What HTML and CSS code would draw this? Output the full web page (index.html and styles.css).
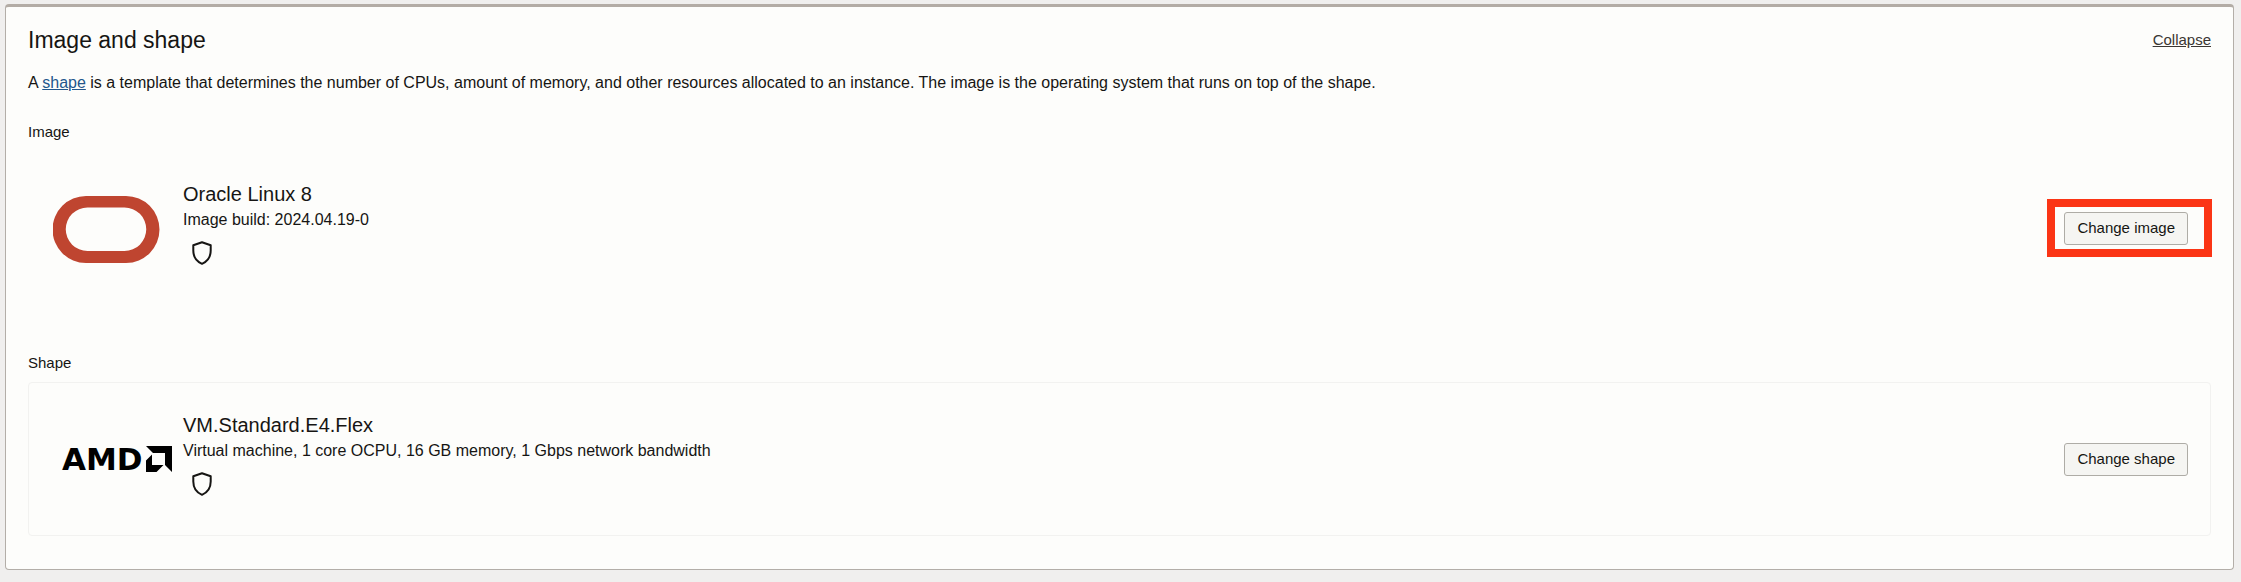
FILE: index.html
```html
<!DOCTYPE html>
<html lang="en">
<head>
<meta charset="utf-8">
<title>Image and shape</title>
<link rel="stylesheet" href="styles.css">
</head>
<body>
<main class="panel">
  <header class="panel-header">
    <h2 class="panel-title">Image and shape</h2>
    <a class="collapse" href="#">Collapse</a>
  </header>
  <p class="intro">A <a class="link" href="#">shape</a> is a template that determines the number of CPUs, amount of memory, and other resources allocated to an instance. The image is the operating system that runs on top of the shape.</p>

  <section class="group">
    <h3 class="label">Image</h3>
    <div class="card card-plain">
      <div class="logo">
        <svg width="108" height="72" viewBox="0 0 108 72" role="img" aria-label="Oracle">
          <path fill="#bf4530" fill-rule="evenodd" d="M33 4H73A33.500 33.500 0 0 1 73 71H33A33.500 33.500 0 0 1 33 4ZM34.500 15.500A21.700 21.700 0 0 0 34.500 59H71.500A21.700 21.700 0 0 0 71.500 15.500Z"/>
        </svg>
      </div>
      <div class="details">
        <div class="name">Oracle Linux 8</div>
        <div class="meta">Image build: 2024.04.19-0</div>
        <svg class="shield" width="20" height="24" viewBox="0 0 20 24" aria-hidden="true"><path d="M10 1.200L1.300 4.300V9.500C1.300 15.500 4.500 20.500 10 22.800C15.500 20.500 18.700 15.500 18.700 9.500V4.300Z"/></svg>
      </div>
      <div class="action highlighted"><button class="btn" type="button">Change image</button></div>
    </div>
  </section>

  <section class="group">
    <h3 class="label">Shape</h3>
    <div class="card">
      <div class="logo">
        <svg width="120" height="46" viewBox="0 0 120 46" role="img" aria-label="AMD">
          <text class="amd-word" x="9" y="34">AMD</text>
          <path d="M93 10H119V36L112 29V17H100ZM99 18.500V29H110.500L103.500 36H93V24.500Z"/>
        </svg>
      </div>
      <div class="details">
        <div class="name">VM.Standard.E4.Flex</div>
        <div class="meta">Virtual machine, 1 core OCPU, 16 GB memory, 1 Gbps network bandwidth</div>
        <svg class="shield" width="20" height="24" viewBox="0 0 20 24" aria-hidden="true"><path d="M10 1.200L1.300 4.300V9.500C1.300 15.500 4.500 20.500 10 22.800C15.500 20.500 18.700 15.500 18.700 9.500V4.300Z"/></svg>
      </div>
      <div class="action"><button class="btn" type="button">Change shape</button></div>
    </div>
  </section>
</main>
</body>
</html>
```
FILE: styles.css
```css
* { box-sizing: border-box; }
body {
  margin: 0;
  padding: 4px 7px 11px 5px;
  background: #f0efee;
  color: #161513;
  font: 15px/20px "Liberation Sans", Arial, sans-serif;
}
.panel {
  padding: 18px 22px 33px;
  background: #fdfdfb;
  border: 1px solid #b3aea8;
  border-top: 3px solid #b3aca5;
  border-radius: 4px;
}
.panel-header {
  display: flex;
  justify-content: space-between;
  align-items: center;
  margin-bottom: 18px;
}
.panel-title {
  margin: 0;
  font-size: 23px;
  line-height: 30px;
  font-weight: 400;
}
.collapse {
  color: #3a3632;
  text-underline-offset: 1px;
}
.link {
  color: #22568c;
  text-underline-offset: 1px;
}
.intro {
  margin: 0 0 29px;
  font-size: 16px;
}
.group + .group { margin-top: 48px; }
.label {
  margin: 0 0 9px;
  font-size: 15px;
  font-weight: 400;
}
.card {
  display: grid;
  grid-template-columns: 130px 1fr auto;
  min-height: 154px;
  padding: 30px 22px 30px 24px;
  border: 1px solid #f2f2f0;
  border-radius: 4px;
}
.card-plain { border-color: transparent; }
.logo {
  display: flex;
  align-items: center;
}
.amd-word {
  font: bold 31px "DejaVu Sans", sans-serif;
}
.name {
  font-size: 20px;
  line-height: 24px;
}
.meta {
  font-size: 16px;
  line-height: 28px;
}
.shield {
  display: block;
  margin: 7px 0 0 9px;
  fill: none;
  stroke: #161513;
  stroke-width: 2;
  stroke-linejoin: round;
}
.action {
  position: relative;
  align-self: center;
}
.btn {
  display: block;
  height: 33px;
  padding: 0 12px;
  border: 1px solid #aeaca6;
  border-radius: 3px;
  background: #f5f5f2;
  color: inherit;
  font: inherit;
}
.highlighted::after {
  content: "";
  position: absolute;
  inset: -13px -24px -12px -17px;
  border: 8px solid #fb3515;
  pointer-events: none;
}
```
